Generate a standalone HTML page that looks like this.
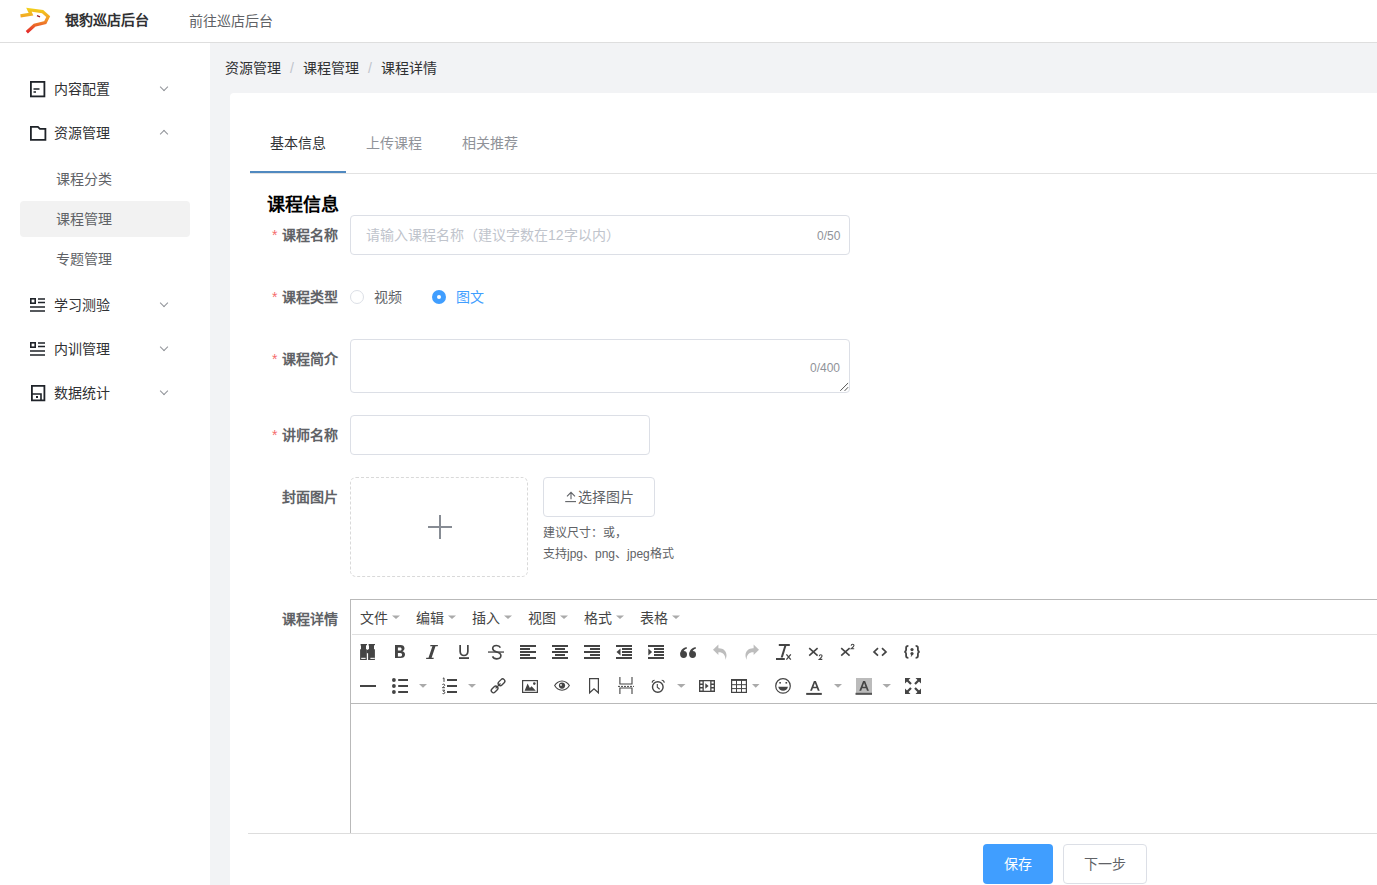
<!DOCTYPE html>
<html lang="zh-CN"><head><meta charset="utf-8">
<style>
*{box-sizing:border-box;margin:0;padding:0}
html,body{width:1377px;height:885px;overflow:hidden;background:#fff;font-family:"Liberation Sans",sans-serif;font-size:14px;color:#303133}
.a{position:absolute}
.t{position:absolute;white-space:nowrap;line-height:20px}
#hdr{left:0;top:0;width:1377px;height:43px;border-bottom:1px solid #dedede;background:#fff}
#side{left:0;top:43px;width:210px;height:842px;background:#fff}
#main{left:210px;top:43px;width:1167px;height:842px;background:#f2f3f5}
#card{left:230px;top:93px;width:1200px;height:800px;background:#fff;border-radius:4px}
.mi{color:#303133}
.sub{color:#606266}
.chev{position:absolute;width:6px;height:6px;border-right:1px solid #909399;border-bottom:1px solid #909399}
.lbl{position:absolute;font-weight:bold;color:#606266;white-space:nowrap;line-height:20px}
.req{position:absolute;color:#f56c6c;font-size:14px;line-height:20px}
.inp{position:absolute;border:1px solid #dcdfe6;border-radius:4px;background:#fff}
.cnt{position:absolute;color:#909399;font-size:12px;line-height:14px}
.ic{position:absolute}
</style></head><body>
<!-- header -->
<div id="hdr" class="a"></div>
<svg class="ic" style="left:16px;top:4px" width="40" height="34" viewBox="0 0 40 34">
<defs><linearGradient id="lg" x1="0" y1="4" x2="0" y2="29" gradientUnits="userSpaceOnUse"><stop offset="0" stop-color="#f2d21a"/><stop offset="0.45" stop-color="#f29a28"/><stop offset="1" stop-color="#e3222a"/></linearGradient></defs>
<path d="M4.5 11.8 L15 10.2 L12.9 5.7 L26.5 7.6 L32.2 12.6 L29.2 18.6 L18.5 21.2 L10.8 28.2" fill="none" stroke="url(#lg)" stroke-width="3.2" stroke-linejoin="miter" stroke-linecap="butt"/>
<path d="M21 11.6 L24 12.8" stroke="#9b1a22" stroke-width="1.4"/>
</svg>
<div class="t" style="left:65px;top:10px;font-weight:bold;color:#303133">银豹巡店后台</div>
<div class="t" style="left:189px;top:11px;color:#606266">前往巡店后台</div>

<!-- sidebar -->
<div id="side" class="a"></div>
<div id="main" class="a"></div>
<!-- menu icons -->
<svg class="ic" style="left:29px;top:80px" width="18" height="18" viewBox="0 0 18 18"><rect x="1.9" y="1.9" width="13.5" height="14.5" fill="none" stroke="#1f2329" stroke-width="1.8"/><path d="M4.5 9h6M4.5 12h2.5" stroke="#1f2329" stroke-width="1.5"/></svg>
<div class="t mi" style="left:54px;top:79px">内容配置</div>
<div class="chev" style="left:161px;top:84px;transform:rotate(45deg)"></div>

<svg class="ic" style="left:29px;top:124px" width="18" height="18" viewBox="0 0 18 18"><path d="M1.9 2.9h7l2 2h5.5v11H1.9z" fill="none" stroke="#1f2329" stroke-width="1.8" stroke-linejoin="miter"/></svg>
<div class="t mi" style="left:54px;top:123px">资源管理</div>
<div class="chev" style="left:161px;top:131px;transform:rotate(225deg)"></div>

<div class="t sub" style="left:56px;top:169px">课程分类</div>
<div class="a" style="left:20px;top:201px;width:170px;height:36px;background:#f2f2f2;border-radius:4px"></div>
<div class="t sub" style="left:56px;top:209px">课程管理</div>
<div class="t sub" style="left:56px;top:249px">专题管理</div>

<svg class="ic" style="left:29px;top:296px" width="18" height="18" viewBox="0 0 18 18"><rect x="1.8" y="2.8" width="4.4" height="4.4" fill="none" stroke="#1f2329" stroke-width="1.6"/><path d="M9 3h7M9 6.5h7M1 11h15M1 15h15" stroke="#1f2329" stroke-width="1.6"/></svg>
<div class="t mi" style="left:54px;top:295px">学习测验</div>
<div class="chev" style="left:161px;top:300px;transform:rotate(45deg)"></div>

<svg class="ic" style="left:29px;top:340px" width="18" height="18" viewBox="0 0 18 18"><rect x="1.8" y="2.8" width="4.4" height="4.4" fill="none" stroke="#1f2329" stroke-width="1.6"/><path d="M9 3h7M9 6.5h7M1 11h15M1 15h15" stroke="#1f2329" stroke-width="1.6"/></svg>
<div class="t mi" style="left:54px;top:339px">内训管理</div>
<div class="chev" style="left:161px;top:344px;transform:rotate(45deg)"></div>

<svg class="ic" style="left:29px;top:384px" width="18" height="18" viewBox="0 0 18 18"><path d="M2.9 1.9h12.5v14.5H2.9z" fill="none" stroke="#1f2329" stroke-width="1.8"/><path d="M3 10h9v6" fill="none" stroke="#1f2329" stroke-width="1.6"/><rect x="7" y="12" width="2" height="2" fill="#1f2329"/></svg>
<div class="t mi" style="left:54px;top:383px">数据统计</div>
<div class="chev" style="left:161px;top:388px;transform:rotate(45deg)"></div>

<!-- breadcrumb -->
<div class="t" style="left:225px;top:58px;color:#303133">资源管理<span style="color:#c0c4cc;margin:0 9px">/</span>课程管理<span style="color:#c0c4cc;margin:0 9px">/</span>课程详情</div>

<div id="card" class="a"></div>

<!-- tabs -->
<div class="t" style="left:270px;top:133px;color:#303133">基本信息</div>
<div class="t" style="left:366px;top:133px;color:#909399">上传课程</div>
<div class="t" style="left:462px;top:133px;color:#909399">相关推荐</div>
<div class="a" style="left:250px;top:173px;width:1127px;height:1px;background:#e2e2e2"></div>
<div class="a" style="left:250px;top:171px;width:96px;height:2px;background:#5089c0"></div>

<div class="t" style="left:267px;top:193px;font-size:18px;font-weight:bold;color:#000;line-height:24px">课程信息</div>

<!-- row 1 -->
<div class="req" style="left:272px;top:225px">*</div>
<div class="lbl" style="left:282px;top:225px">课程名称</div>
<div class="inp" style="left:350px;top:215px;width:500px;height:40px"></div>
<div class="t" style="left:366px;top:225px;color:#c0c4cc">请输入课程名称（建议字数在12字以内）</div>
<div class="cnt" style="left:817px;top:229px">0/50</div>

<!-- row 2 -->
<div class="req" style="left:272px;top:287px">*</div>
<div class="lbl" style="left:282px;top:287px">课程类型</div>
<div class="a" style="left:350px;top:290px;width:14px;height:14px;border:1px solid #dcdfe6;border-radius:50%"></div>
<div class="t" style="left:374px;top:287px;color:#606266">视频</div>
<div class="a" style="left:432px;top:290px;width:14px;height:14px;background:#409eff;border-radius:50%"></div>
<div class="a" style="left:437px;top:295px;width:4px;height:4px;background:#fff;border-radius:50%"></div>
<div class="t" style="left:456px;top:287px;color:#409eff">图文</div>

<!-- row 3 -->
<div class="req" style="left:272px;top:349px">*</div>
<div class="lbl" style="left:282px;top:349px">课程简介</div>
<div class="inp" style="left:350px;top:339px;width:500px;height:54px"></div>
<div class="cnt" style="left:810px;top:361px">0/400</div>
<svg class="ic" style="left:839px;top:381px" width="10" height="10" viewBox="0 0 10 10"><path d="M1.2 9.9L9.1 2M5.6 9.9L9.1 6.2" stroke="#555" stroke-width="1"/></svg>

<!-- row 4 -->
<div class="req" style="left:272px;top:425px">*</div>
<div class="lbl" style="left:282px;top:425px">讲师名称</div>
<div class="inp" style="left:350px;top:415px;width:300px;height:40px"></div>

<!-- row 5 -->
<div class="lbl" style="left:282px;top:487px">封面图片</div>
<div class="a" style="left:350px;top:477px;width:178px;height:100px;border:1px dashed #d9d9d9;border-radius:6px"></div>
<div class="a" style="left:428px;top:526px;width:24px;height:2px;background:#878c94"></div>
<div class="a" style="left:439px;top:515px;width:2px;height:24px;background:#878c94"></div>
<div class="inp" style="left:543px;top:477px;width:112px;height:40px"></div>
<svg class="ic" style="left:564px;top:490px" width="14" height="14" viewBox="0 0 14 14"><path d="M1.2 11.6h10.8" stroke="#606266" stroke-width="1.1"/><path d="M7 2.5v6.8M3 6.3l4-4 4 4" fill="none" stroke="#606266" stroke-width="1.1"/></svg>
<div class="t" style="left:578px;top:487px;color:#606266">选择图片</div>
<div class="t" style="left:543px;top:523px;font-size:12px;color:#606266">建议尺寸：或，</div>
<div class="t" style="left:543px;top:544px;font-size:12px;color:#606266">支持jpg、png、jpeg格式</div>

<!-- row 6 editor -->
<div class="lbl" style="left:282px;top:609px">课程详情</div>
<div class="a" style="left:350px;top:599px;width:1040px;height:300px;border:1px solid #b9b9b9;background:#fff"></div>
<div class="a" style="left:352px;top:634px;width:1030px;height:1px;background:#e0e0e0"></div>
<div class="a" style="left:351px;top:703px;width:1030px;height:1px;background:#b9b9b9"></div>
<svg class="ic" style="left:0;top:0" width="1377" height="885" viewBox="0 0 1377 885">
<g font-family="Liberation Sans, sans-serif">
<!-- menubar carets -->
<g fill="#aaa">
<path d="M392 615.5h8l-4 3.5z"/><path d="M448 615.5h8l-4 3.5z"/><path d="M504 615.5h8l-4 3.5z"/>
<path d="M560 615.5h8l-4 3.5z"/><path d="M616 615.5h8l-4 3.5z"/><path d="M672 615.5h8l-4 3.5z"/>
</g>
<g fill="#444" stroke="none">
<!-- binoculars -->
<path d="M361 644h6v1.3h-1v3.9h0.8v10.8h-6.7v-10.8h0.9v-3.9h-1z"/><path d="M369 644h6v1.3h-1v3.9h0.9v10.8h-6.8v-10.8h0.9v-3.9h-1z"/>
<rect x="366.5" y="649.8" width="3" height="3.4"/>
<rect x="361.2" y="657.8" width="4.4" height="1.1" fill="#fff"/><rect x="370.4" y="657.8" width="4.4" height="1.1" fill="#fff"/>
<!-- B -->
<path fill-rule="evenodd" d="M395 645h5.4c2.6 0 4.1 1.2 4.1 3.3 0 1.5-0.8 2.4-2.1 2.9 1.7 0.4 2.6 1.6 2.6 3.3 0 2.4-1.7 3.5-4.5 3.5H395zM397.9 647.4v3.2h2.1c1 0 1.6-0.6 1.6-1.6s-0.6-1.6-1.6-1.6zM397.9 652.9v3.6h2.4c1.1 0 1.8-0.7 1.8-1.8s-0.7-1.8-1.8-1.8z"/>
<!-- I -->
<path d="M430.4 645H438l-0.3 1.3h-2.2l-3.9 11.4h2.2l-0.3 1.3H426l0.3-1.3h2.2l3.9-11.4h-2.2z"/>
<!-- U -->
<path d="M459.3 645h1.7v6.4c0 2 1.3 3.3 3 3.3s3-1.3 3-3.3V645h1.7v6.4c0 3-2 4.8-4.7 4.8s-4.7-1.8-4.7-4.8z"/>
<rect x="459" y="657.2" width="10" height="1.8"/>
<!-- S strike -->
<path d="M488 651.4h16v1.3h-16z"/>
<path d="M500.4 647.6c-0.6-1.3-2-2.1-3.9-2.1-2.3 0-3.8 1.3-3.8 3.1 0 4.4 8.2 2.4 8.2 7 0 1.9-1.6 3.3-4.1 3.3-2 0-3.6-0.9-4.3-2.5" fill="none" stroke="#444" stroke-width="1.6"/>
<!-- align left -->
<rect x="520" y="645" width="16" height="2"/><rect x="520" y="648" width="10" height="2"/><rect x="520" y="651" width="16" height="2"/><rect x="520" y="654" width="10" height="2"/><rect x="520" y="657" width="16" height="2"/>
<!-- align center -->
<rect x="552" y="645" width="16" height="2"/><rect x="555" y="648" width="10" height="2"/><rect x="552" y="651" width="16" height="2"/><rect x="555" y="654" width="10" height="2"/><rect x="552" y="657" width="16" height="2"/>
<!-- align right -->
<rect x="584" y="645" width="16" height="2"/><rect x="590" y="648" width="10" height="2"/><rect x="584" y="651" width="16" height="2"/><rect x="590" y="654" width="10" height="2"/><rect x="584" y="657" width="16" height="2"/>
<!-- outdent -->
<rect x="616" y="645" width="16" height="2"/><rect x="622" y="648" width="10" height="2"/><rect x="622" y="651" width="10" height="2"/><rect x="622" y="654" width="10" height="2"/><rect x="616" y="657" width="16" height="2"/>
<path d="M620.5 648.6v6.8l-4-3.4z"/>
<!-- indent -->
<rect x="648" y="645" width="16" height="2"/><rect x="654" y="648" width="10" height="2"/><rect x="654" y="651" width="10" height="2"/><rect x="654" y="654" width="10" height="2"/><rect x="648" y="657" width="16" height="2"/>
<path d="M648.3 648.6v6.8l3.8-3.4z"/>
<!-- blockquote -->
<circle cx="683.6" cy="654.5" r="3.4"/><circle cx="692.6" cy="654.5" r="3.4"/>
<path d="M680.3 654.2c0-3.6 2.3-6.2 6.2-7.2l0.5 1.4c-2.6 0.9-4 2.6-4.2 5.4z"/>
<path d="M689.3 654.2c0-3.6 2.3-6.2 6.2-7.2l0.5 1.4c-2.6 0.9-4 2.6-4.2 5.4z"/>
</g>
<!-- undo / redo -->
<g fill="#bdbdbd">
<path d="M713 649.8l5.4-5.3v10.6z"/>
<path d="M717.5 648.3h1.5c4.3 0 7.5 2.8 7.5 7 0 1.7-0.5 3.3-1.4 4.7 0.1-0.6 0.2-1.2 0.2-1.8 0-3.2-2.6-5.9-6.3-5.9h-1.5z"/>
<path d="M759 649.8l-5.4-5.3v10.6z"/>
<path d="M754.5 648.3H753c-4.3 0-7.5 2.8-7.5 7 0 1.7 0.5 3.3 1.4 4.7-0.1-0.6-0.2-1.2-0.2-1.8 0-3.2 2.6-5.9 6.3-5.9h1.5z"/>
</g>
<g fill="#444">
<!-- remove format -->
<rect x="778.8" y="644" width="11" height="2"/>
<path d="M784.3 645.8h2.1l-3.6 11.6h-2.1z"/>
<rect x="776" y="658" width="8.8" height="2"/>
</g>
<g stroke="#444" fill="none">
<path d="M786.4 654.3l4.4 5.4M790.8 654.3l-4.4 5.4" stroke-width="1.3"/>
<!-- subscript -->
<path d="M809.2 648.2l8.4 7.4M817.6 648.2l-8.4 7.4" stroke-width="1.6"/>
<path d="M819.3 656.3c0-1 0.6-1.6 1.4-1.6 0.8 0 1.4 0.5 1.4 1.3 0 0.9-0.7 1.6-2.8 3.4h3" stroke-width="1.1"/>
<!-- superscript -->
<path d="M841.2 648.2l8.4 7.4M849.6 648.2l-8.4 7.4" stroke-width="1.6"/>
<path d="M851.2 645.8c0-1 0.6-1.5 1.4-1.5 0.8 0 1.4 0.5 1.4 1.3 0 0.9-0.7 1.5-2.8 3.2h3" stroke-width="1.1"/>
<!-- code -->
<path d="M878 648.1l-4 3.8 4 3.8M882 648.1l4 3.8-4 3.8" stroke-width="1.7"/>
<!-- codesample -->
<path d="M908.4 645.9c-1.6 0-2.3 0.6-2.3 1.9v2.3c0 1-0.5 1.6-1.7 1.8 1.2 0.2 1.7 0.8 1.7 1.8v2.3c0 1.3 0.7 1.9 2.3 1.9M915.6 645.9c1.6 0 2.3 0.6 2.3 1.9v2.3c0 1 0.5 1.6 1.7 1.8-1.2 0.2-1.7 0.8-1.7 1.8v2.3c0 1.3-0.7 1.9-2.3 1.9" stroke-width="1.8"/>
</g>
<g fill="#444">
<circle cx="912" cy="649.6" r="1.6"/><circle cx="912" cy="653.6" r="1.6"/><path d="M912.6 653.5c0 1.5-0.5 2.6-1.6 3.2l-0.3-0.5c0.6-0.5 0.8-1.2 0.8-2.2z"/>

<!-- ROW 2 -->
<rect x="360" y="685" width="16" height="2"/>
<!-- bullist -->
<circle cx="393.9" cy="680" r="1.9"/><circle cx="393.9" cy="686" r="1.9"/><circle cx="393.9" cy="692" r="1.9"/>
<rect x="398.2" y="679" width="9.8" height="2"/><rect x="398.2" y="685" width="9.8" height="2"/><rect x="398.2" y="691" width="9.8" height="2"/>
<!-- numlist -->
<rect x="447" y="679" width="10" height="2"/><rect x="447" y="685" width="10" height="2"/><rect x="447" y="691" width="10" height="2"/>
</g>
<g stroke="#444" fill="none" stroke-width="1">
<path d="M442.8 678.5l1.2-0.6v4"/>
<path d="M442.4 685c0.2-0.6 0.6-0.9 1.2-0.9 0.6 0 1.1 0.4 1.1 1 0 0.6-0.5 1.1-2.3 2.6h2.5"/>
<path d="M442.4 690.2h2.3l-1.2 1.3c0.8 0 1.3 0.4 1.3 1.1 0 0.6-0.5 1.1-1.2 1.1-0.6 0-1-0.2-1.2-0.6"/>
</g>
<g fill="#aaa">
<path d="M419 684h8l-4 3.8z"/><path d="M468 684h8l-4 3.8z"/><path d="M677 684h8.5l-4.25 3.8z"/><path d="M752 684h7.5l-3.75 3.8z"/><path d="M834 684h8l-4 3.8z"/><path d="M882.5 684h8.5l-4.25 3.8z"/>
</g>
<g stroke="#444" fill="none">
<!-- link -->
<rect x="497.7" y="680.1" width="7.6" height="4.4" rx="2.2" transform="rotate(-45 501.5 682.3)" stroke-width="1.35"/>
<rect x="490.8" y="687.2" width="7.6" height="4.4" rx="2.2" transform="rotate(-45 494.6 689.4)" stroke-width="1.35"/>
<path d="M495.6 688.4l4.9-4.9" stroke-width="1.3"/>
<!-- image -->
<rect x="522.6" y="680.6" width="14.8" height="11.8" stroke-width="1.2"/>
<!-- bookmark -->
<path d="M589.6 678.6h8.8v14.2l-4.4-4-4.4 4z" stroke-width="1.2"/>
<!-- pagebreak -->
<path d="M619.9 677v7h12.1v-7M619.9 694v-6h12.1v6" stroke-width="1.1"/>
<path d="M618 686.4h16" stroke-width="1" stroke-dasharray="2 1"/>
<!-- alarm -->
<circle cx="657.8" cy="687" r="5.3" stroke-width="1.4"/>
<path d="M657.3 684v3.3l2.4 1.9" stroke-width="1.1"/>
<!-- media -->
<!-- table -->
<rect x="731.6" y="679.6" width="14.8" height="12.8" stroke-width="1.2"/>
<path d="M731.6 680.4h14.8M731.6 684.7h14.8M731.6 688.6h14.8M736.5 680v12.4M741.5 680v12.4" stroke-width="1"/>
<!-- emoji -->
<circle cx="783" cy="685.9" r="7.3" stroke-width="1.2"/>
<!-- fullscreen shafts -->
<path d="M907 680l4 4M919 680l-4 4M907 692l4-4M919 692l-4-4" stroke-width="2.2"/>
</g>
<g fill="#444">
<!-- image mountain + sun -->
<path d="M524.6 690.8l3-7.3 2.3 4.6 1.7-1.8 4.2 4.5z"/><circle cx="534.3" cy="683.6" r="1.3"/>
<!-- eye -->
<path fill-rule="evenodd" d="M562 680.4c-3.6 0-6.4 2.2-8 5.2 1.6 3 4.4 5.2 8 5.2s6.4-2.2 8-5.2c-1.6-3-4.4-5.2-8-5.2zM562 681.5c2.9 0 5.3 1.7 6.7 4.1-1.4 2.4-3.8 4.1-6.7 4.1s-5.3-1.7-6.7-4.1c1.4-2.4 3.8-4.1 6.7-4.1z"/>
<circle cx="562" cy="685.6" r="3.1"/><circle cx="561" cy="684.9" r="0.9" fill="#fff"/>
<!-- alarm bells -->
<path d="M651.6 682.6c0-1.6 1.3-2.9 3-2.9l0.3 0.9c-1.1 0.3-2 1.1-2.4 2.3zM664.8 682.6c0-1.6-1.3-2.9-3-2.9l-0.3 0.9c1.1 0.3 2 1.1 2.4 2.3z"/>
<!-- media holes/strips -->
<path fill-rule="evenodd" d="M699 680h16v12h-16zM703.8 681.2v9.6h6.4v-9.6zM700.3 681.4v2h2.2v-2zM700.3 685v2h2.2v-2zM700.3 688.6v2h2.2v-2zM711.5 681.4v2h2.2v-2zM711.5 685v2h2.2v-2zM711.5 688.6v2h2.2v-2z"/>
<path d="M705.3 683.3v5.4l3.3-2.7z"/>
<!-- emoji face -->
<rect x="779.3" y="682" width="1.6" height="1.6"/><rect x="785.5" y="682" width="1.6" height="1.6"/>
<path d="M778.3 686.8h9.6c-0.4 2.5-2.4 4-4.8 4s-4.4-1.5-4.8-4z"/>
<!-- forecolor -->
<path d="M813.9 681.1h2l3.8 9.6h-1.9l-0.9-2.5h-4l-0.9 2.5h-1.9zM814.9 683.1l-1.4 3.6h2.8z"/>
<rect x="806.2" y="692.9" width="15.6" height="2"/>
<!-- backcolor -->
<rect x="856" y="678" width="16" height="16.7" fill="#bbb"/>
<path d="M863.1 681h2l3.8 9.7h-1.9l-0.9-2.5h-4l-0.9 2.5h-1.9zM864.1 683l-1.4 3.7h2.8z"/>
<rect x="855.5" y="692.8" width="16.5" height="2" fill="#555"/>
<!-- fullscreen heads -->
<path d="M905 678h5.5l-5.5 5.5zM921 678h-5.5l5.5 5.5zM905 694h5.5l-5.5-5.5zM921 694h-5.5l5.5-5.5z"/>
</g>
</g>
</svg>
<div class="t" style="left:360px;top:608px;color:#444">文件</div>
<div class="t" style="left:416px;top:608px;color:#444">编辑</div>
<div class="t" style="left:472px;top:608px;color:#444">插入</div>
<div class="t" style="left:528px;top:608px;color:#444">视图</div>
<div class="t" style="left:584px;top:608px;color:#444">格式</div>
<div class="t" style="left:640px;top:608px;color:#444">表格</div>


<!-- footer -->
<div class="a" style="left:248px;top:833px;width:1129px;height:52px;background:#fff;border-top:1px solid #dddddd"></div>
<div class="a" style="left:983px;top:844px;width:70px;height:40px;background:#409eff;border-radius:4px"></div>
<div class="t" style="left:1004px;top:854px;color:#fff">保存</div>
<div class="inp" style="left:1063px;top:844px;width:84px;height:40px"></div>
<div class="t" style="left:1084px;top:854px;color:#606266">下一步</div>
</body></html>
